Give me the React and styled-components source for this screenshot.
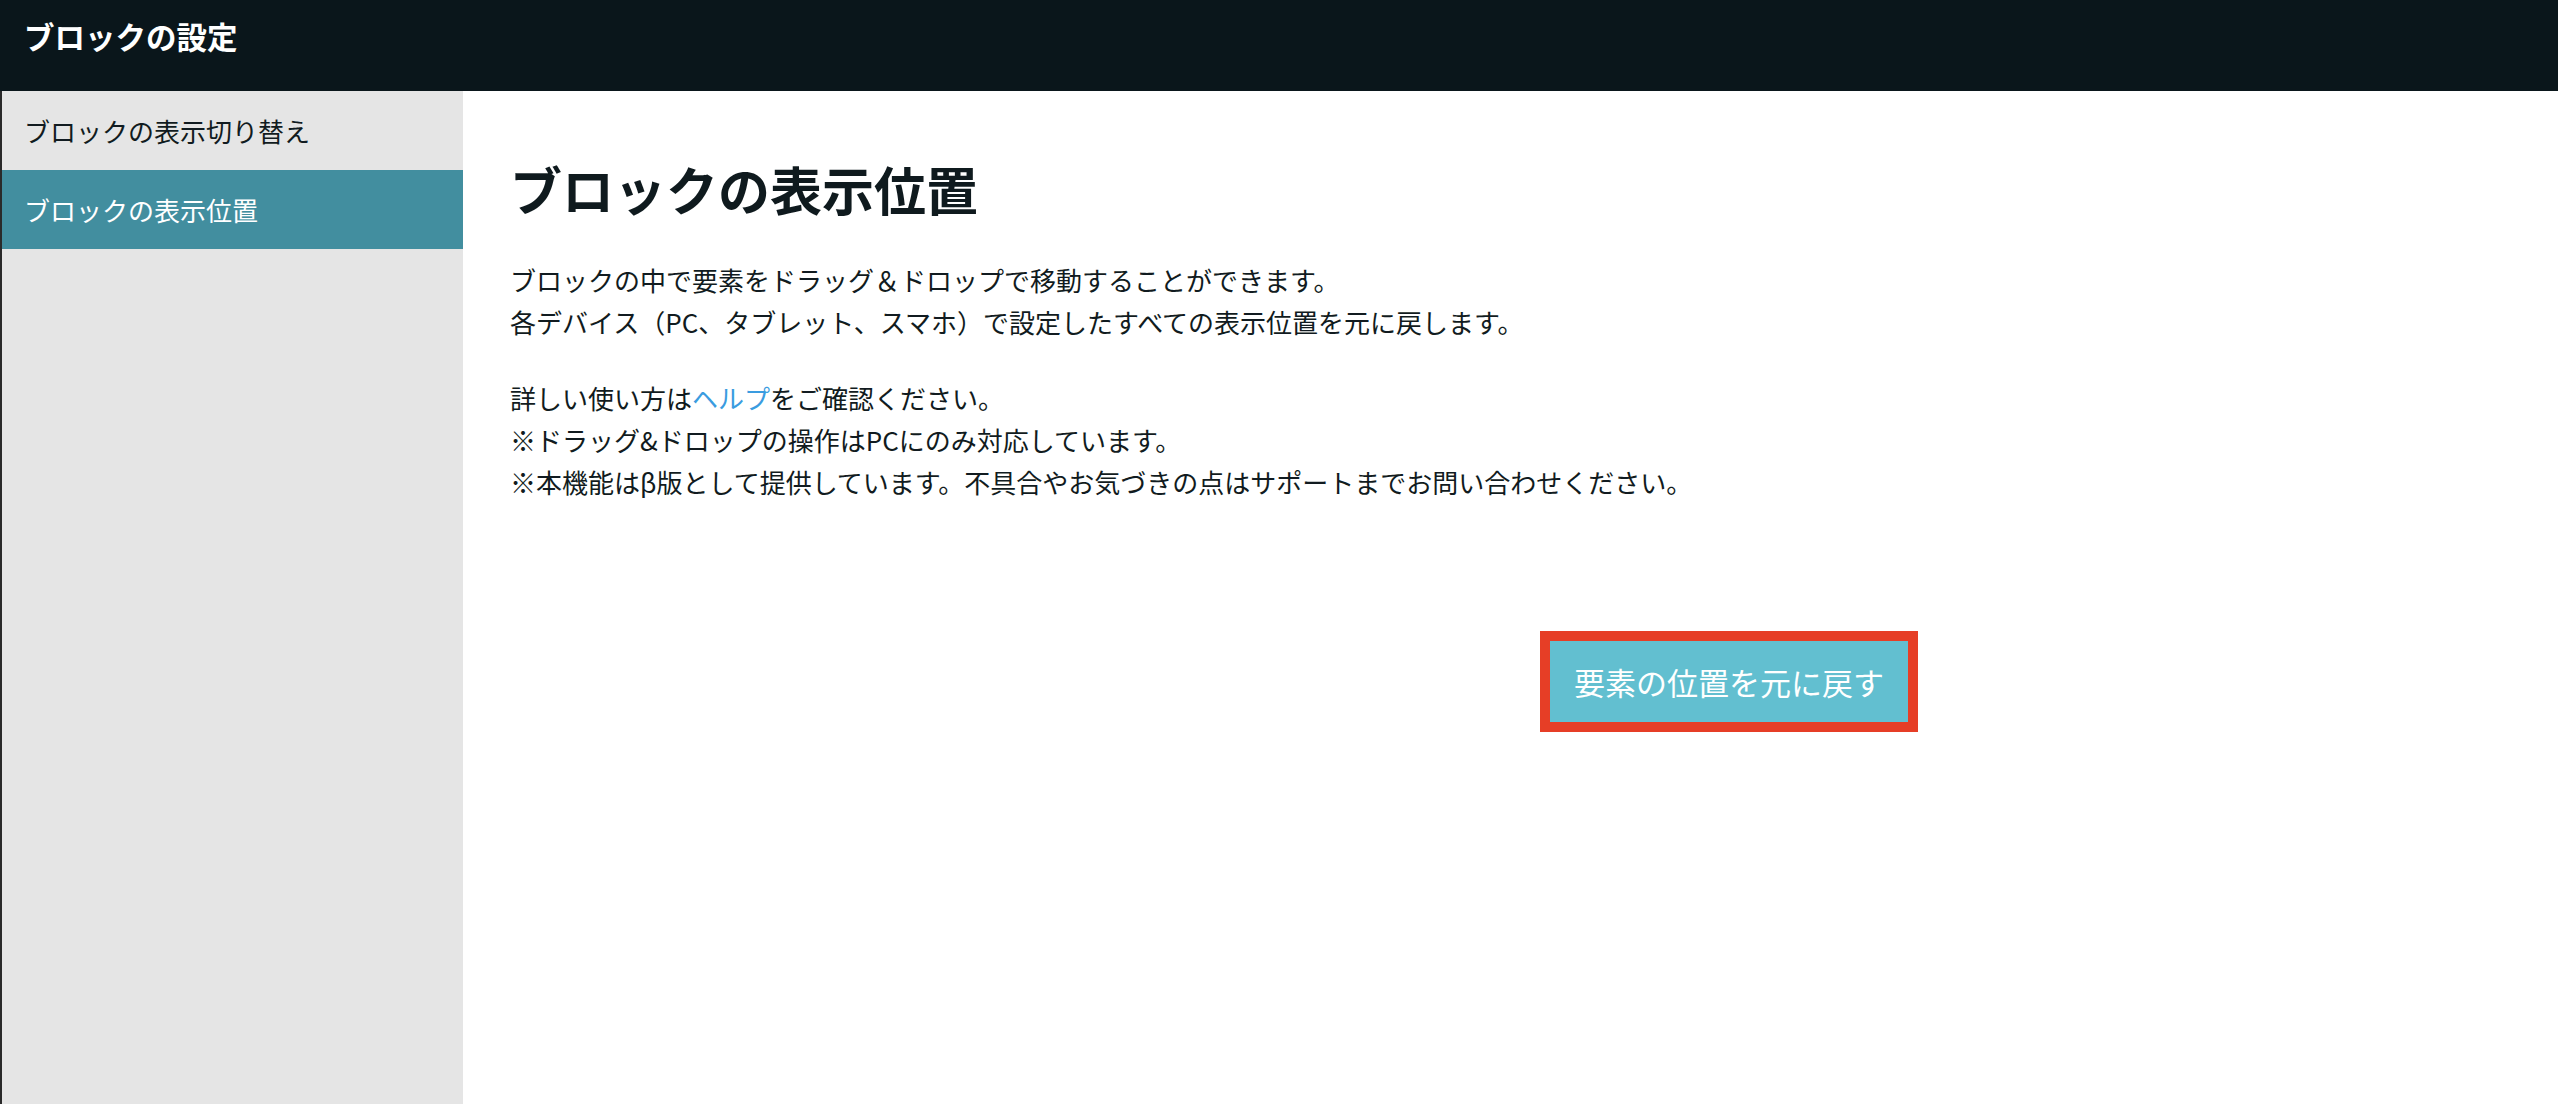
import React from 'react'
import styled, {createGlobalStyle, css} from 'styled-components'

const GlobalStyle = createGlobalStyle`
    html, body {
        margin: 0;
        padding: 0;
        background: #fff;
    }
    body {
        font-family: 'Noto Sans CJK JP', 'Noto Sans', sans-serif;
        color: #0f1a1e;
    }
    * {
        box-sizing: border-box;
    }
`

const Page = styled.div`
    display: flex;
    flex-direction: column;
    min-height: 100vh;
`

const Header = styled.header`
    display: flex;
    align-items: center;
    height: 91px;
    padding: 0 0 20px 24px;
    background: #0a161b;
    color: #fff;
    font-size: 30.5px;
    font-weight: 700;
`

const Body = styled.div`
    display: flex;
    flex: 1;
    border-left: 2px solid #2a2a2a;
`

const Sidebar = styled.nav`
    display: flex;
    flex-direction: column;
    width: 461px;
    background: #e5e5e5;
`

const NavItem = styled.div`
    display: flex;
    align-items: center;
    height: 79px;
    padding-left: 22px;
    font-size: 26px;
    color: #111b20;
    cursor: pointer;

    ${props => props.active && css`
        background: #428e9f;
        color: #fff;
    `}
`

const Main = styled.main`
    flex: 1;
    padding: 61px 0 0 47px;
    background: #fff;
`

const Title = styled.h1`
    margin: 0;
    font-size: 52px;
    font-weight: 700;
    line-height: 73px;
    color: #0f1a1e;
`

const Text = styled.p`
    margin: 34px 0 0;
    font-size: 26px;
    line-height: 42px;
    color: #111b20;
`

const HelpLink = styled.a`
    color: #3a9ce0;
    text-decoration: none;
`

const Actions = styled.div`
    display: flex;
    margin-top: 128px;
    padding-left: 1030px;
`

const ResetButton = styled.button`
    display: flex;
    align-items: center;
    justify-content: center;
    height: 101px;
    padding: 0 24px;
    border: 10px solid #e63e26;
    background: #62bfd0;
    color: #fff;
    font-family: 'Noto Sans CJK JP', 'Noto Sans', sans-serif;
    font-size: 31px;
    cursor: pointer;
`

const App = () => (
    <Page>
        <GlobalStyle />
        <Header>ブロックの設定</Header>
        <Body>
            <Sidebar>
                <NavItem>ブロックの表示切り替え</NavItem>
                <NavItem active>ブロックの表示位置</NavItem>
            </Sidebar>
            <Main>
                <Title>ブロックの表示位置</Title>
                <Text>
                    ブロックの中で要素をドラッグ＆ドロップで移動することができます。<br />
                    各デバイス（PC、タブレット、スマホ）で設定したすべての表示位置を元に戻します。
                </Text>
                <Text>
                    詳しい使い方は<HelpLink href="#">ヘルプ</HelpLink>をご確認ください。<br />
                    ※ドラッグ&amp;ドロップの操作はPCにのみ対応しています。<br />
                    ※本機能はβ版として提供しています。不具合やお気づきの点はサポートまでお問い合わせください。
                </Text>
                <Actions>
                    <ResetButton>要素の位置を元に戻す</ResetButton>
                </Actions>
            </Main>
        </Body>
    </Page>
)

export default App
